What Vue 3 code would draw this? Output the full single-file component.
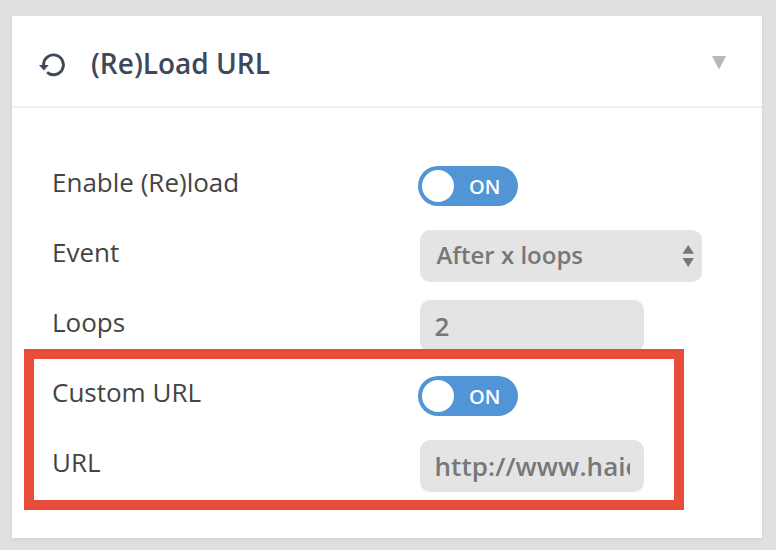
<script setup>
import { ref } from 'vue'

const enabled = ref(true)
const customUrl = ref(true)
const loops = ref('2')
const url = ref('http://www.haiered.com')
</script>

<template>
  <main class="page">
    <section class="card">
      <header class="card-header">
        <svg class="reload" width="28" height="26" viewBox="0 0 28 26">
          <path d="M4.6 13.5A9.9 9.9 0 1 1 8.1 20.4" fill="none" stroke="#3d4959" stroke-width="2.9" />
          <path d="M0 13H9.8L4.9 18.5Z" fill="#3d4959" />
        </svg>
        <h1 class="title">(Re)Load URL</h1>
        <svg class="caret" width="16" height="14" viewBox="0 0 16 14">
          <path d="M1 0H15L8 13.5Z" fill="#b8b8b8" />
        </svg>
      </header>
      <div class="rows">
        <div class="row">
          <span class="label">Enable (Re)load</span>
          <button class="toggle" @click="enabled = !enabled">
            <span class="knob"></span><span class="state">{{ enabled ? 'ON' : 'OFF' }}</span>
          </button>
        </div>
        <div class="row">
          <span class="label">Event</span>
          <div class="field select">
            <span class="value">After x loops</span>
            <svg width="12" height="22" viewBox="0 0 12 22">
              <path d="M0.5 8.7L6.2 0L12 8.7ZM0.5 13L6.2 22L12 13Z" fill="#777" />
            </svg>
          </div>
        </div>
        <div class="row">
          <span class="label">Loops</span>
          <input v-model="loops" class="field input" />
        </div>
        <div class="row">
          <span class="label">Custom URL</span>
          <button class="toggle" @click="customUrl = !customUrl">
            <span class="knob"></span><span class="state">{{ customUrl ? 'ON' : 'OFF' }}</span>
          </button>
        </div>
        <div class="row">
          <span class="label">URL</span>
          <input v-model="url" class="field input" />
        </div>
      </div>
    </section>
    <div class="highlight"></div>
  </main>
</template>

<style>
body {
  background: #e0e0e0;
}
</style>

<style scoped>
.page {
  position: relative;
  box-sizing: border-box;
  width: 776px;
  height: 550px;
  padding: 16px 14px 12px 12px;
  overflow: hidden;
  background: #e0e0e0;
  font-family: "Open Sans", sans-serif;
}
.card {
  height: 522px;
  background: #fff;
  box-shadow: 0 2px 4px rgba(0, 0, 0, 0.06);
}
.card-header {
  display: flex;
  align-items: center;
  box-sizing: border-box;
  height: 92px;
  padding: 0 35px 0 27px;
  border-bottom: 2px solid #eee;
}
.reload {
  margin-top: 8px;
}
.title {
  flex: 1;
  margin: 4px 0 0 24px;
  color: #3d4959;
  font-size: 28px;
  font-weight: 600;
  line-height: 38px;
}
.caret {
  margin-top: 4px;
}
.rows {
  padding: 43px 0 0 40px;
}
.row {
  display: flex;
  align-items: center;
  height: 70px;
}
.label {
  width: 366px;
  padding-bottom: 8px;
  color: #444;
  font-size: 26px;
  line-height: 36px;
}
.toggle {
  display: flex;
  align-items: center;
  box-sizing: border-box;
  width: 100px;
  height: 40px;
  padding: 0 4px;
  border: 0;
  border-radius: 20px;
  background: #5195d7;
  font-family: inherit;
}
.knob {
  width: 32px;
  height: 32px;
  border-radius: 50%;
  background: #fff;
}
.state {
  margin: 1px 0 0 15px;
  color: #fff;
  font-size: 20px;
  font-weight: 550;
  line-height: 28px;
}
.field {
  box-sizing: border-box;
  height: 52px;
  margin-left: 2px;
  border: 0;
  border-radius: 10px;
  background: #e4e4e4;
  color: #777;
  font-family: inherit;
  font-weight: 600;
}
.select {
  display: flex;
  align-items: center;
  justify-content: space-between;
  width: 282px;
  padding: 0 8px 0 16.5px;
  font-size: 24px;
}
.value {
  padding-bottom: 3px;
}
.input {
  width: 224px;
  padding: 0 14px 0 14.5px;
  font-size: 26px;
  letter-spacing: 0.06px;
  outline: none;
}
.highlight {
  position: absolute;
  top: 349px;
  left: 24px;
  box-sizing: border-box;
  width: 660px;
  height: 161px;
  border: 10px solid #ea4c3b;
  pointer-events: none;
}
</style>
